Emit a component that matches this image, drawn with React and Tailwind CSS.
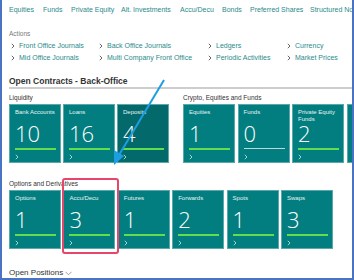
import React from 'react';

const font = { fontFamily: '"Liberation Sans", Arial, sans-serif' };

const navItems = [
  ['Equities', 'w-[34px]'],
  ['Funds', 'w-[28px]'],
  ['Private Equity', 'w-[50px]'],
  ['Alt. Investments', 'w-[59px]'],
  ['Accu/Decu', 'w-[42px]'],
  ['Bonds', 'w-[28px]'],
  ['Preferred Shares', 'w-[60px]'],
  ['Structured Notes', 'w-[60px]'],
];

const actionCols = [
  ['Front Office Journals', 'Mid Office Journals'],
  ['Back Office Journals', 'Multi Company Front Office'],
  ['Ledgers', 'Periodic Activities'],
  ['Currency', 'Market Prices'],
];

function Chevron({ className }) {
  return (
    <svg width="4" height="6" viewBox="0 0 4 6" className={className}>
      <path d="M0.8 0.8 L3 3 L0.8 5.2" fill="none" stroke="currentColor" strokeWidth="0.9" />
    </svg>
  );
}

function Tile({ label, value, dark, empty }) {
  return (
    <div className={`w-[52px] h-[59px] shrink-0 flex flex-col pl-[5px] pr-[4px] border border-[#5aa9aa] ${dark ? 'bg-[#03696b]' : 'bg-[#037e80]'}`}>
      <div className="h-[17px] pt-[4px] text-[6px] leading-[7px] text-[#e6f3f3]">{label}</div>
      <div className="h-[22px] leading-[22px] text-[22px] font-light text-white" style={{ fontFamily: '"Open Sans", sans-serif' }}>{value}</div>
      <div className="h-[2px] mt-[4px] flex items-start">
        {empty ? <div className="w-full h-[1px] bg-[#b9dada]" /> : <div className="w-full h-[2px] bg-[#62dd4e]" />}
      </div>
      <div className="mt-[4px] text-[#b6dcdc]"><Chevron /></div>
    </div>
  );
}

export default function App() {
  return (
    <div className="relative w-[354px] h-[280px] bg-white border-l-2 border-r-2 border-b-2 border-[#4a74c2] overflow-hidden" style={font}>
      <div className="pl-[7px]">
        <div className="h-[20px] flex items-center whitespace-nowrap text-[7px] text-[#2a8a8c]">
          {navItems.map(([n, w]) => <span key={n} className={`${w} shrink-0`}>{n}</span>)}
        </div>

        <div className="mt-[9px] h-[10px] leading-[10px] text-[6.5px] text-[#7a7a7a]">Actions</div>
        <div className="mt-[1px] pl-[2px] grid grid-cols-[88px_109px_79px_auto] whitespace-nowrap text-[7px] text-[#2a8a8c]">
          {actionCols.map((col, i) => (
            <div key={i} className="flex flex-col">
              {col.map(a => (
                <div key={a} className="h-[12px] flex items-center gap-[4px]">
                  <Chevron className="text-[#555]" />
                  <span>{a}</span>
                </div>
              ))}
            </div>
          ))}
        </div>

        <div className="mt-[11px] h-[12px] leading-[12px] text-[8.5px] font-bold text-[#333]">Open Contracts - Back-Office</div>
        <div className="h-[2px] bg-[#cdcdcd]" />

        <div className="mt-[4px] flex gap-[14px]">
          <div className="flex flex-col">
            <div className="h-[10px] leading-[10px] text-[6.5px] text-[#333]">Liquidity</div>
            <div className="mt-[1px] flex gap-[2px]">
              <Tile label="Bank Accounts" value="10" />
              <Tile label="Loans" value="16" />
              <Tile label="Deposits" value="4" dark />
            </div>
          </div>
          <div className="flex flex-col">
            <div className="h-[10px] leading-[10px] text-[6.5px] text-[#333] whitespace-nowrap">Crypto, Equities and Funds</div>
            <div className="mt-[1px] flex gap-[2.5px]">
              <Tile label="Equities" value="1" />
              <Tile label="Funds" value="0" empty />
              <Tile label="Private Equity Funds" value="2" />
              <Tile label="Alt. Investments" value="0" empty />
            </div>
          </div>
        </div>

        <div className="mt-[16px] h-[10px] leading-[10px] text-[6.5px] text-[#333]">Options and Derivatives</div>
        <div className="mt-[1px] flex gap-[2.4px]">
          <Tile label="Options" value="1" />
          <Tile label="Accu/Decu" value="3" />
          <Tile label="Futures" value="1" />
          <Tile label="Forwards" value="2" />
          <Tile label="Spots" value="1" />
          <Tile label="Swaps" value="3" />
        </div>

        <div className="mt-[18px] h-[12px] flex items-center gap-[2px] text-[8px] text-[#333]">
          <span>Open Positions</span>
          <svg width="7" height="5" viewBox="0 0 7 5"><path d="M0.5 0.8 L3.5 3.8 L6.5 0.8" fill="none" stroke="#888" strokeWidth="0.8" /></svg>
        </div>
      </div>

      <div className="absolute left-[60px] top-[178px] w-[57px] h-[76px] border-2 border-[#e8456d] rounded-[3px]" />

      <svg className="absolute left-0 top-0" width="354" height="280" viewBox="0 0 354 280">
        <line x1="162" y1="80" x2="117" y2="155" stroke="#1d9de2" strokeWidth="2" />
        <polygon points="112,165 112,150 122,156" fill="#1d9de2" />
      </svg>
    </div>
  );
}
